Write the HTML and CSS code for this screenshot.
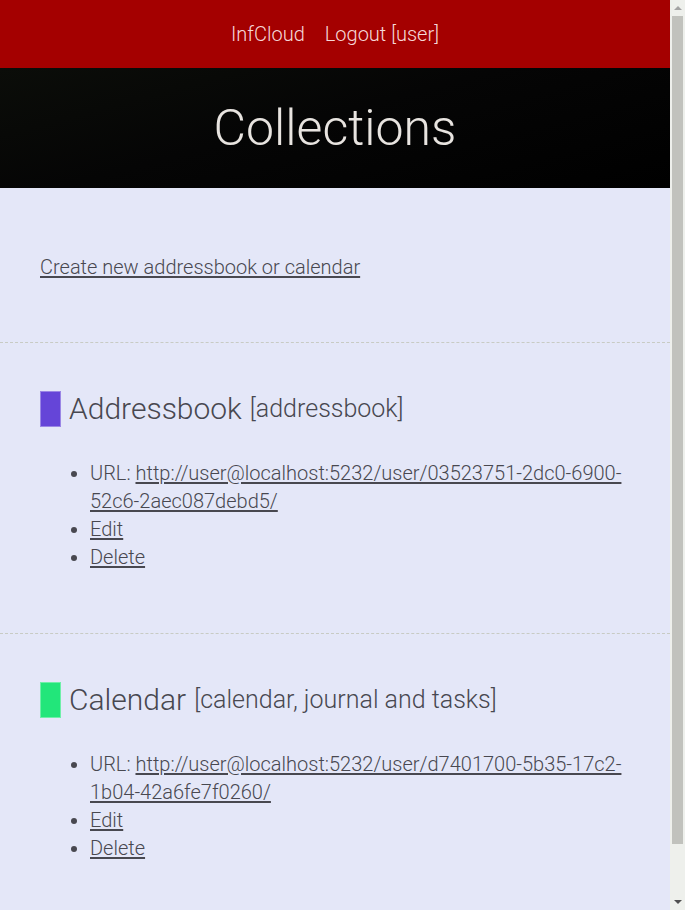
FILE: index.html
```html
<!DOCTYPE html>
<html lang="en">
<head>
<meta charset="utf-8">
<title>Collections</title>
<link rel="stylesheet" href="styles.css">
</head>
<body>
<div class="page">
  <nav class="topnav">
    <a href="#" class="navlink">InfCloud</a>
    <a href="#" class="navlink">Logout [user]</a>
  </nav>
  <header class="hero">
    <h1 class="hero-title">Collections</h1>
  </header>
  <main class="content">
    <section class="section section-create">
      <p class="create"><a href="#" class="link">Create new addressbook or calendar</a></p>
    </section>
    <section class="section">
      <h3 class="coll-title"><span class="swatch swatch-purple"></span>Addressbook <small class="coll-type">[addressbook]</small></h3>
      <ul class="coll-list">
        <li>URL: <a href="#" class="link">http://user@localhost:5232/user/03523751-2dc0-6900-52c6-2aec087debd5/</a></li>
        <li><a href="#" class="link">Edit</a></li>
        <li><a href="#" class="link">Delete</a></li>
      </ul>
    </section>
    <section class="section">
      <h3 class="coll-title"><span class="swatch swatch-green"></span>Calendar <small class="coll-type">[calendar, journal and tasks]</small></h3>
      <ul class="coll-list">
        <li>URL: <a href="#" class="link">http://user@localhost:5232/user/d7401700-5b35-17c2-1b04-42a6fe7f0260/</a></li>
        <li><a href="#" class="link">Edit</a></li>
        <li><a href="#" class="link">Delete</a></li>
      </ul>
    </section>
  </main>
</div>
<div class="scrollbar" aria-hidden="true">
  <span class="sb-arrow sb-up"></span>
  <span class="sb-thumb"></span>
  <span class="sb-arrow sb-down"></span>
</div>
</body>
</html>
```
FILE: styles.css
```css
html, body {
  margin: 0;
  padding: 0;
}
body {
  font-family: Roboto, "Liberation Sans", sans-serif;
  font-weight: 300;
  font-size: 20px;
  line-height: 28px;
  color: #484850;
  background: #e4e7f8;
}
.page {
  margin-right: 15px;
}
.topnav {
  height: 68px;
  background: #a40000;
  display: flex;
  justify-content: center;
  align-items: center;
  gap: 20px;
}
.navlink {
  color: rgba(255, 238, 238, 0.92);
  text-decoration: none;
  font-size: 20px;
}
.hero {
  height: 120px;
  background: linear-gradient(165deg, #0b0d09 0%, #050505 45%, #000 100%);
  display: flex;
  align-items: center;
  justify-content: center;
}
.hero-title {
  margin: 0;
  font-weight: 300;
  font-size: 50px;
  line-height: 56px;
  color: #e8e4e0;
}
.content {
  padding-bottom: 44px;
}
.section {
  padding: 20px 40px 30px;
  border-top: 1px dashed #c8cbc4;
}
.section-create {
  border-top: none;
}
.create {
  margin: 45px 0 31px;
}
.link {
  color: #484850;
  text-decoration: underline;
  text-decoration-thickness: 2px;
  text-underline-offset: 2px;
}
.coll-title {
  margin: 28px 0;
  font-weight: 300;
  font-size: 30px;
  line-height: 36px;
  display: flex;
  align-items: center;
}
.coll-type {
  font-size: 25px;
  margin-left: 8px;
}
.swatch {
  display: inline-block;
  width: 19px;
  height: 34px;
  margin-right: 8px;
  border: 1px solid rgba(255, 255, 255, 0.35);
}
.swatch-purple {
  background: #6545d8;
}
.swatch-green {
  background: #22e67a;
}
.coll-list {
  margin: 32px 0;
  padding-left: 50px;
}
.scrollbar {
  position: fixed;
  top: 0;
  right: 0;
  width: 15px;
  height: 100%;
  background: #eef0ec;
  display: flex;
  flex-direction: column;
  align-items: center;
}
.sb-arrow {
  width: 0;
  height: 0;
  border-left: 4px solid transparent;
  border-right: 4px solid transparent;
  margin: 6px 0;
}
.sb-up {
  border-bottom: 4px solid #a3a3a3;
}
.sb-down {
  border-top: 4px solid #505050;
}
.sb-thumb {
  width: 11px;
  height: 828px;
  background: #c1c2bd;
  margin-bottom: auto;
}
```
